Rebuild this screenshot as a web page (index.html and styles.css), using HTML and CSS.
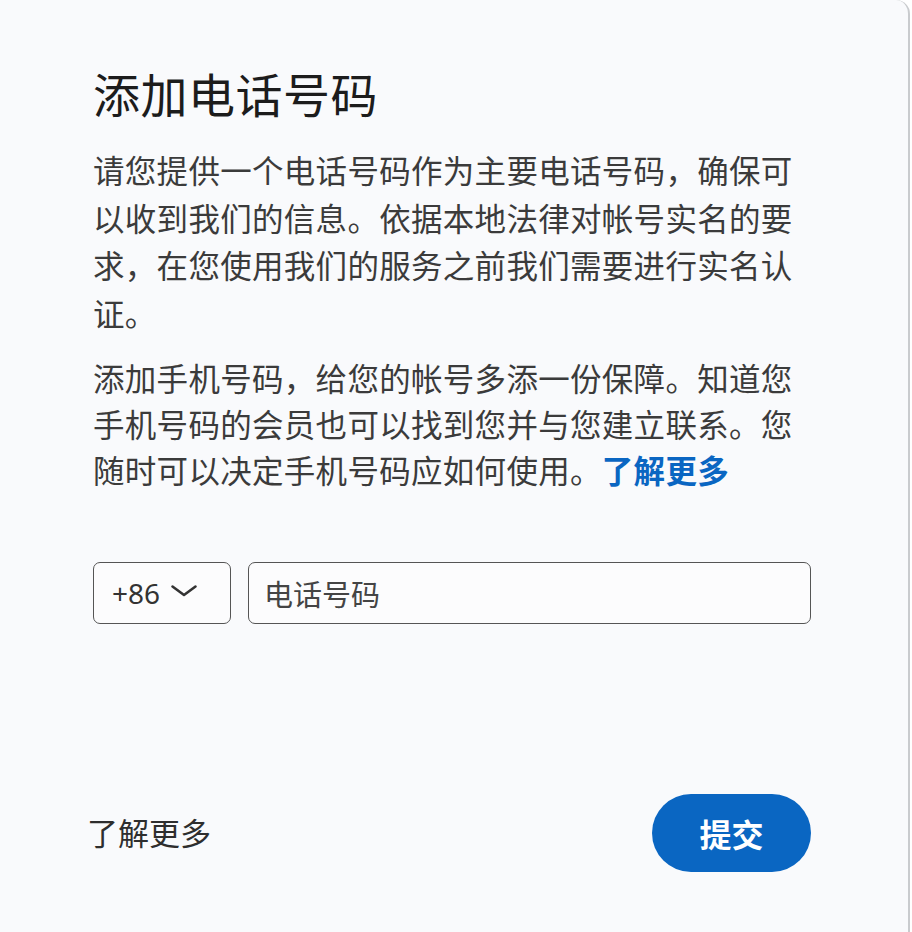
FILE: index.html
```html
<!DOCTYPE html>
<html lang="zh-CN">
<head>
<meta charset="utf-8">
<title>添加电话号码</title>
<link rel="stylesheet" href="styles.css">
</head>
<body>
<div class="card">
  <h1 class="title">添加电话号码</h1>
  <p class="para para-1">请您提供一个电话号码作为主要电话号码，确保可以收到我们的信息。依据本地法律对帐号实名的要求，在您使用我们的服务之前我们需要进行实名认证。</p>
  <p class="para para-2">添加手机号码，给您的帐号多添一份保障。知道您手机号码的会员也可以找到您并与您建立联系。您随时可以决定手机号码应如何使用。<a class="inline-link" href="#">了解更多</a></p>
  <div class="phone-row">
    <div class="country">
      <span class="code">+86</span>
      <svg class="chev" width="28" height="14" viewBox="0 0 28 14"><path d="M2.5 2.5 L14 11 L25.5 2.5" fill="none" stroke="#333" stroke-width="2.6" stroke-linecap="round" stroke-linejoin="round"/></svg>
    </div>
    <div class="phone-input"><span class="placeholder">电话号码</span></div>
  </div>
  <div class="footer">
    <a class="more" href="#">了解更多</a>
    <button class="submit" type="button">提交</button>
  </div>
</div>
</body>
</html>
```

FILE: styles.css
```css
html, body {
  margin: 0;
  padding: 0;
  background: #ffffff;
}
body {
  font-family: "Noto Sans CJK SC", "Noto Sans", sans-serif;
  width: 912px;
  height: 932px;
  overflow: hidden;
}
.card {
  box-sizing: border-box;
  width: 910px;
  height: 932px;
  background: #f9fafc;
  border-right: 2px solid #c9cbce;
  border-top-right-radius: 14px;
  padding: 65px 97px 0 93px;
}
.title {
  margin: 0;
  font-size: 47px;
  line-height: 56px;
  font-weight: 400;
  color: #1c1c1c;
  letter-spacing: 0.5px;
}
.para {
  margin: 0;
  font-size: 31.5px;
  color: #3b3b3b;
  letter-spacing: 0.3px;
}
.para-1 {
  margin-top: 25px;
  line-height: 47.5px;
}
.para-2 {
  margin-top: 18px;
  line-height: 46px;
}
.inline-link {
  color: #0a66c2;
  font-weight: 700;
  text-decoration: none;
}
.phone-row {
  margin-top: 70px;
  display: flex;
  gap: 17px;
  height: 62px;
}
.country, .phone-input {
  box-sizing: border-box;
  height: 62px;
  border: 1.5px solid #555;
  border-radius: 7px;
  background: #fcfcfd;
  display: flex;
  align-items: center;
}
.country {
  width: 138px;
  padding-left: 18px;
  gap: 10px;
}
.code {
  font-size: 28px;
  color: #333;
  font-family: "Noto Sans", "Noto Sans CJK SC", sans-serif;
}
.chev {
  margin-top: -4px;
}
.phone-input {
  flex: 1;
  padding-left: 15px;
}
.placeholder {
  font-size: 29px;
  color: #444;
}
.footer {
  margin-top: 170px;
  margin-left: -6px;
  display: flex;
  justify-content: space-between;
  align-items: center;
}
.more {
  font-size: 31px;
  color: #2e2e2e;
  text-decoration: none;
  margin-top: -4px;
}
.submit {
  width: 159px;
  height: 78px;
  border: none;
  border-radius: 39px;
  background: #0a66c2;
  color: #ffffff;
  font-family: "Noto Sans CJK SC", sans-serif;
  font-size: 32px;
  font-weight: 700;
  padding: 0;
}
```
